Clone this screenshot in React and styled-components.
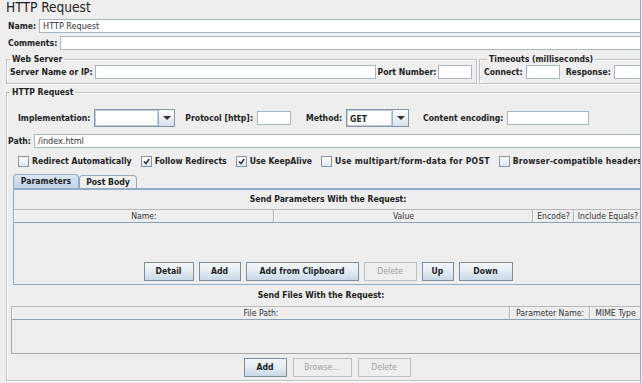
import styled, { createGlobalStyle } from "styled-components";

const GlobalStyle = createGlobalStyle`
    html, body {
        margin: 0;
        padding: 0;
        background: #eeeeee;
    }
    body {
        width: 642px;
        height: 383px;
        overflow: hidden;
        font-family: "DejaVu Sans Condensed", "DejaVu Sans", sans-serif;
        font-stretch: condensed;
        color: #222;
    }
`

const Frame = styled.div`
    width: 640px;
    height: 383px;
    border-right: 1px solid #8faacb;
    overflow: hidden;
    background: #eeeeee;
`
const Page = styled.div`
    width: 700px;
`
const Title = styled.div`
    height: 16px;
    line-height: 14px;
    padding-left: 6px;
    font-size: 13.6px;
`
const Row = styled.div`
    display: flex;
    align-items: ${p => p.top ? "flex-start" : "center"};
    height: ${p => p.h || 15}px;
    margin-top: ${p => p.mt || 0}px;
    padding-left: ${p => p.pl || 0}px;
    gap: ${p => p.gap || 3}px;
`
const Label = styled.span`
    font-size: 8.6px;
    font-weight: bold;
    white-space: nowrap;
    margin-left: ${p => p.ml || 0}px;
`
const Field = styled.div`
    box-sizing: border-box;
    width: ${p => p.w ? p.w + "px" : "auto"};
    flex: ${p => p.w ? "none" : 1};
    height: ${p => p.h || 14}px;
    background: #ffffff;
    border: 1px solid #a9b6c4;
    font-size: 9px;
    line-height: 12px;
    padding-left: 3px;
    white-space: nowrap;
    color: #333;
`
const Box = styled.fieldset`
    margin: 0;
    min-width: 0;
    padding: ${p => p.pad || "0 3px 3px"};
    border: 1px solid #c2c2c2;
    box-shadow: inset 1px 1px 0 #fafafa, 1px 1px 0 #fafafa;
    width: ${p => p.w ? p.w + "px" : "auto"};
    box-sizing: border-box;
`
const Legend = styled.legend`
    font-size: 8.6px;
    font-weight: bold;
    padding: 0 2px;
    margin-left: 3px;
    line-height: 10px;
`
const ServerLine = styled.div`
    display: flex;
    align-items: center;
    gap: 2px;
    margin-left: 3px;
    height: 16px;
`
const Combo = styled.div`
    box-sizing: border-box;
    width: ${p => p.w}px;
    height: 18px;
    display: flex;
    border: 1px solid #8595a6;
    background: #ffffff;
`
const ComboText = styled.div`
    flex: 1;
    font-size: 8.6px;
    font-weight: bold;
    line-height: 16px;
    padding-left: 2px;
    border: 1px solid #b8cfe5;
`
const ComboArrow = styled.div`
    width: 15px;
    border-left: 1px solid #9eb0c2;
    background: linear-gradient(#ffffff, #d6e1ec);
    display: flex;
    align-items: center;
    justify-content: center;
`
const Arrow = styled.div`
    width: 0;
    height: 0;
    border-left: 4px solid transparent;
    border-right: 4px solid transparent;
    border-top: 4px solid #333;
`
const CheckRow = styled.div`
    display: flex;
    align-items: center;
    height: 14px;
    margin-top: 6px;
    padding-left: 11px;
`
const Check = styled.label`
    display: flex;
    align-items: center;
    gap: 3px;
    font-size: 8.6px;
    font-weight: bold;
    white-space: nowrap;
    letter-spacing: ${p => p.ls || 0}px;
    margin-right: ${p => p.mr}px;
`
const Tick = styled.span`
    box-sizing: border-box;
    width: 11px;
    height: 11px;
    border: 1px solid #8595a6;
    background: linear-gradient(#ffffff, #dde6ef);
    display: flex;
    align-items: center;
    justify-content: center;
`
const Tabs = styled.div`
    display: flex;
    margin: 6px 0 0 6px;
    height: 14px;
    align-items: flex-end;
`
const Tab = styled.div`
    box-sizing: border-box;
    height: ${p => p.active ? 14 : 13}px;
    width: ${p => p.w}px;
    font-size: 8.6px;
    font-weight: bold;
    text-align: center;
    line-height: 12px;
    border: 1px solid ${p => p.active ? "#8faacb" : "#9aa6b3"};
    border-bottom: none;
    border-radius: 4px 4px 0 0;
    background: ${p => p.active ? "linear-gradient(#dbe6f1, #c2d4e7)" : "#eeeeee"};
`
const TabPanel = styled.div`
    margin-left: 6px;
    border: 1px solid #8faacb;
    border-top-width: 2px;
    height: 97px;
    box-sizing: border-box;
    display: flex;
    flex-direction: column;
`
const Caption = styled.div`
    font-size: 8.6px;
    font-weight: bold;
    text-align: center;
    width: 628px;
    height: ${p => p.h}px;
    line-height: ${p => p.h}px;
`
const Table = styled.div`
    width: ${p => p.w ? p.w + "px" : "auto"};
    height: ${p => p.h}px;
    box-sizing: border-box;
    border: ${p => p.framed ? "1px solid #a8a8a8" : "none"};
    border-top: none;
    margin-left: ${p => p.ml || 0}px;
`
const Head = styled.div`
    display: flex;
    height: 12px;
    border-top: 1px solid #b9b9b9;
    border-bottom: 1px solid #8da0b4;
    box-sizing: content-box;
`
const HeadCell = styled.div`
    width: ${p => p.w}px;
    flex: none;
    box-sizing: border-box;
    border-left: 1px solid #ffffff;
    border-right: 1px solid #a6b2be;
    font-size: 8.6px;
    line-height: 12px;
    text-align: center;
    white-space: nowrap;
    color: #333;
`
const Buttons = styled.div`
    display: flex;
    justify-content: center;
    gap: ${p => p.gap || 5}px;
    width: ${p => p.w}px;
    margin-top: ${p => p.mt || 0}px;
`
const Button = styled.div`
    box-sizing: border-box;
    width: ${p => p.w}px;
    height: 19px;
    border: 1px solid ${p => p.disabled ? "#b8c0c8" : "#7f8c99"};
    background: ${p => p.disabled ? "#eeeeee" : "linear-gradient(#f4f7fb 0%, #e3ebf3 50%, #c9d8e7 100%)"};
    color: ${p => p.disabled ? "#a0a0a0" : "#222"};
    font-size: 8.6px;
    font-weight: ${p => p.disabled ? "normal" : "bold"};
    text-align: center;
    line-height: 17px;
`

function CheckBox({ checked, label, mr, ls }) {
    return (
        <Check mr={mr} ls={ls}>
            <Tick>
                {checked && (
                    <svg width="7" height="7" viewBox="0 0 7 7">
                        <path d="M1 3.5 L3 5.5 L6.2 1" stroke="#333" strokeWidth="1.5" fill="none" />
                    </svg>
                )}
            </Tick>
            {label}
        </Check>
    )
}

function ComboBox({ w, value }) {
    return (
        <Combo w={w}>
            <ComboText>{value}</ComboText>
            <ComboArrow><Arrow /></ComboArrow>
        </Combo>
    )
}

export default function App() {
    return (
        <Frame>
            <GlobalStyle />
            <Page>
                <Title>HTTP Request</Title>
                <Row mt={2} pl={8} gap={3}>
                    <Label>Name:</Label>
                    <Field>HTTP Request</Field>
                </Row>
                <Row mt={2} pl={8} gap={3}>
                    <Label>Comments:</Label>
                    <Field />
                </Row>

                <Row top h={30} mt={4} pl={6} gap={2}>
                    <Box w={471} pad="0 0 3px">
                        <Legend>Web Server</Legend>
                        <ServerLine>
                            <Label>Server Name or IP:</Label>
                            <Field w={281} />
                            <Label>Port Number:</Label>
                            <Field w={34} />
                        </ServerLine>
                    </Box>
                    <Box w={220} pad="0 0 3px 4px">
                        <Legend>Timeouts (milliseconds)</Legend>
                        <Row h={16} gap={3}>
                            <Label>Connect:</Label>
                            <Field w={34} />
                            <Label ml={3}>Response:</Label>
                            <Field w={40} />
                        </Row>
                    </Box>
                </Row>

                <Row top h={292} mt={3} pl={6}>
                    <Box w={700} pad="0 0 3px 0">
                        <Legend>HTTP Request</Legend>
                        <Row h={19} mt={11} pl={11} gap={4}>
                            <Label>Implementation:</Label>
                            <ComboBox w={81} value="" />
                            <Label ml={6}>Protocol [http]:</Label>
                            <Field w={34} />
                            <Label ml={11}>Method:</Label>
                            <ComboBox w={63} value="GET" />
                            <Label ml={10}>Content encoding:</Label>
                            <Field w={82} />
                        </Row>
                        <Row mt={6} pl={1} gap={3}>
                            <Label>Path:</Label>
                            <Field>/index.html</Field>
                        </Row>
                        <CheckRow>
                            <CheckBox label="Redirect Automatically" mr={9} />
                            <CheckBox checked label="Follow Redirects" mr={9} />
                            <CheckBox checked label="Use KeepAlive" mr={9} />
                            <CheckBox label="Use multipart/form-data for POST" mr={9} ls={0.25} />
                            <CheckBox label="Browser-compatible headers" mr={0} ls={0.15} />
                        </CheckRow>
                        <Tabs>
                            <Tab active w={66}>Parameters</Tab>
                            <Tab w={58}>Post Body</Tab>
                        </Tabs>
                        <TabPanel>
                            <Caption h={19}>Send Parameters With the Request:</Caption>
                            <Table h={52}>
                                <Head>
                                    <HeadCell w={260}>Name:</HeadCell>
                                    <HeadCell w={259}>Value</HeadCell>
                                    <HeadCell w={41}>Encode?</HeadCell>
                                    <HeadCell w={68}>Include Equals?</HeadCell>
                                </Head>
                            </Table>
                            <Buttons w={628} mt={1}>
                                <Button w={50}>Detail</Button>
                                <Button w={42}>Add</Button>
                                <Button w={113}>Add from Clipboard</Button>
                                <Button disabled w={53}>Delete</Button>
                                <Button w={32}>Up</Button>
                                <Button w={54}>Down</Button>
                            </Buttons>
                        </TabPanel>
                        <Caption h={21}>Send Files With the Request:</Caption>
                        <Table framed h={48} w={700} ml={4}>
                            <Head>
                                <HeadCell w={498}>File Path:</HeadCell>
                                <HeadCell w={80}>Parameter Name:</HeadCell>
                                <HeadCell w={51}>MIME Type</HeadCell>
                            </Head>
                        </Table>
                        <Buttons w={640} mt={4} gap={6}>
                            <Button w={43}>Add</Button>
                            <Button disabled w={59}>Browse...</Button>
                            <Button disabled w={53}>Delete</Button>
                        </Buttons>
                    </Box>
                </Row>
            </Page>
        </Frame>
    )
}
